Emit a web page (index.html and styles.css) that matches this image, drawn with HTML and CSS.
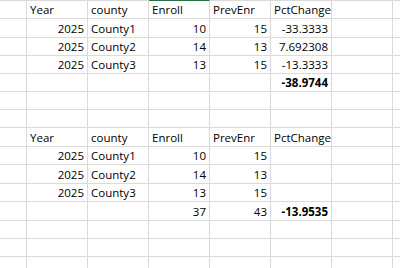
FILE: index.html
```html
<!DOCTYPE html>
<html>
<head>
<meta charset="utf-8">
<link rel="stylesheet" href="styles.css">
</head>
<body>
<div class="sheet">
  <div class="row h19 first">
    <div class="c c0"></div><div class="c">Year</div><div class="c">county</div><div class="c sel">Enroll</div><div class="c">PrevEnr</div><div class="c">PctChange</div><div class="c"></div><div class="c cl"></div>
  </div>
  <div class="row h19">
    <div class="c c0"></div><div class="c r">2025</div><div class="c">County1</div><div class="c r">10</div><div class="c r">15</div><div class="c r">-33.3333</div><div class="c"></div><div class="c cl"></div>
  </div>
  <div class="row h18">
    <div class="c c0"></div><div class="c r">2025</div><div class="c">County2</div><div class="c r">14</div><div class="c r">13</div><div class="c r">7.692308</div><div class="c"></div><div class="c cl"></div>
  </div>
  <div class="row h18">
    <div class="c c0"></div><div class="c r">2025</div><div class="c">County3</div><div class="c r">13</div><div class="c r">15</div><div class="c r">-13.3333</div><div class="c"></div><div class="c cl"></div>
  </div>
  <div class="row h18">
    <div class="c c0"></div><div class="c"></div><div class="c"></div><div class="c"></div><div class="c"></div><div class="c r b">-38.9744</div><div class="c"></div><div class="c cl"></div>
  </div>
  <div class="row h18">
    <div class="c c0"></div><div class="c"></div><div class="c"></div><div class="c"></div><div class="c"></div><div class="c"></div><div class="c"></div><div class="c cl"></div>
  </div>
  <div class="row h18">
    <div class="c c0"></div><div class="c"></div><div class="c"></div><div class="c"></div><div class="c"></div><div class="c"></div><div class="c"></div><div class="c cl"></div>
  </div>
  <div class="row h19">
    <div class="c c0"></div><div class="c">Year</div><div class="c">county</div><div class="c">Enroll</div><div class="c">PrevEnr</div><div class="c">PctChange</div><div class="c"></div><div class="c cl"></div>
  </div>
  <div class="row h18">
    <div class="c c0"></div><div class="c r">2025</div><div class="c">County1</div><div class="c r">10</div><div class="c r">15</div><div class="c"></div><div class="c"></div><div class="c cl"></div>
  </div>
  <div class="row h19">
    <div class="c c0"></div><div class="c r">2025</div><div class="c">County2</div><div class="c r">14</div><div class="c r">13</div><div class="c"></div><div class="c"></div><div class="c cl"></div>
  </div>
  <div class="row h18">
    <div class="c c0"></div><div class="c r">2025</div><div class="c">County3</div><div class="c r">13</div><div class="c r">15</div><div class="c"></div><div class="c"></div><div class="c cl"></div>
  </div>
  <div class="row h19">
    <div class="c c0"></div><div class="c"></div><div class="c"></div><div class="c r">37</div><div class="c r">43</div><div class="c r b">-13.9535</div><div class="c"></div><div class="c cl"></div>
  </div>
  <div class="row h18">
    <div class="c c0"></div><div class="c"></div><div class="c"></div><div class="c"></div><div class="c"></div><div class="c"></div><div class="c"></div><div class="c cl"></div>
  </div>
  <div class="row h18">
    <div class="c c0"></div><div class="c"></div><div class="c"></div><div class="c"></div><div class="c"></div><div class="c"></div><div class="c"></div><div class="c cl"></div>
  </div>
  <div class="row h18">
    <div class="c c0"></div><div class="c"></div><div class="c"></div><div class="c"></div><div class="c"></div><div class="c"></div><div class="c"></div><div class="c cl"></div>
  </div>
</div>
</body>
</html>
```
FILE: styles.css
```css
html, body {
  margin: 0;
  padding: 0;
  background: #ffffff;
  overflow: hidden;
}
.sheet {
  width: 400px;
  height: 268px;
  overflow: hidden;
  font-family: "Open Sans", "Liberation Sans", Arial, sans-serif;
  font-size: 11.5px;
  color: #000000;
}
.row {
  display: flex;
  box-sizing: border-box;
}
.h18 { height: 18px; }
.h19 { height: 19px; }
.c {
  box-sizing: border-box;
  flex: 0 0 61px;
  width: 61px;
  border-right: 1px solid #dadada;
  border-bottom: 1px solid #dadada;
  padding: 0 3px 1px 3px;
  display: flex;
  align-items: flex-end;
  justify-content: flex-start;
  line-height: 14px;
  white-space: nowrap;
}
.first .c {
  border-top: 1px solid #dadada;
}
.first .c.sel {
  border-top-color: #217346;
}
.c0 {
  flex: 0 0 27px;
  width: 27px;
}
.cl {
  flex: 1 0 auto;
  border-right: none;
}
.r {
  justify-content: flex-end;
}
.b {
  font-weight: bold;
}
```
